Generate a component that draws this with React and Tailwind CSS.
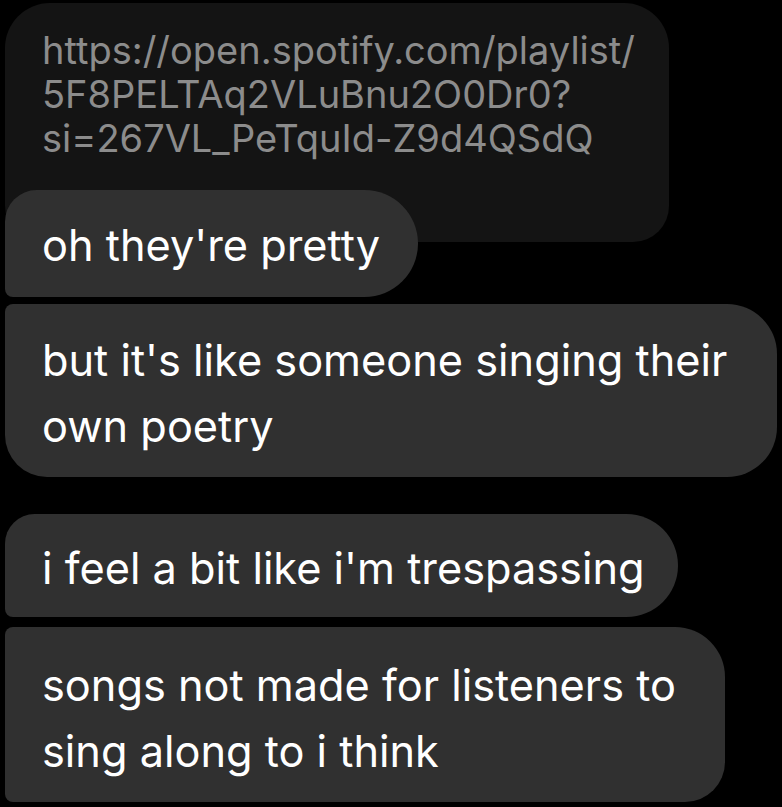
import React from 'react';

// chat thread, dark mode
const messages = [
  {
    lines: ["oh they're pretty"],
    box: 'w-[413px] h-[107px] rounded-tl-[32px] rounded-bl-[8px] rounded-r-[54px] -mt-[52px] pt-[22px]',
  },
  {
    lines: ["but it's like someone singing their", 'own poetry'],
    box: 'w-[772px] h-[173px] rounded-tl-[8px] rounded-bl-[42px] rounded-r-[50px] mt-[7px] pt-[23px]',
  },
  {
    lines: ["i feel a bit like i'm trespassing"],
    box: 'w-[673px] h-[103px] rounded-tl-[30px] rounded-bl-[8px] rounded-r-[52px] mt-[37px] pt-[21px]',
  },
  {
    lines: ['songs not made for listeners to', 'sing along to i think'],
    box: 'w-[720px] h-[175px] rounded-tl-[8px] rounded-bl-[8px] rounded-tr-[50px] rounded-br-[40px] mt-[10px] pt-[25px]',
  },
];

export default function App() {
  return (
    <div className="w-[782px] h-[807px] bg-black overflow-hidden pl-[5px] pt-[3px] font-['Inter','Liberation_Sans',sans-serif]">
      {/* shared link */}
      <div className="w-[664px] h-[239px] bg-[#141414] rounded-tl-[45px] rounded-tr-[45px] rounded-br-[36px] rounded-bl-[36px] pl-[37px] pt-[25px] text-[#8c8c8c] text-[38px] leading-[44px]">
        <div>https://open.spotify.com/playlist/</div>
        <div>5F8PELTAq2VLuBnu2O0Dr0?</div>
        <div>si=267VL_PeTquId-Z9d4QSdQ</div>
      </div>

      {messages.map((m, i) => (
        <div key={i} className={`relative bg-[#303030] text-white pl-[37px] text-[43.3px] leading-[66px] whitespace-nowrap ${m.box}`}>
          {m.lines.map((l, j) => (
            <div key={j}>{l}</div>
          ))}
        </div>
      ))}
    </div>
  );
}
